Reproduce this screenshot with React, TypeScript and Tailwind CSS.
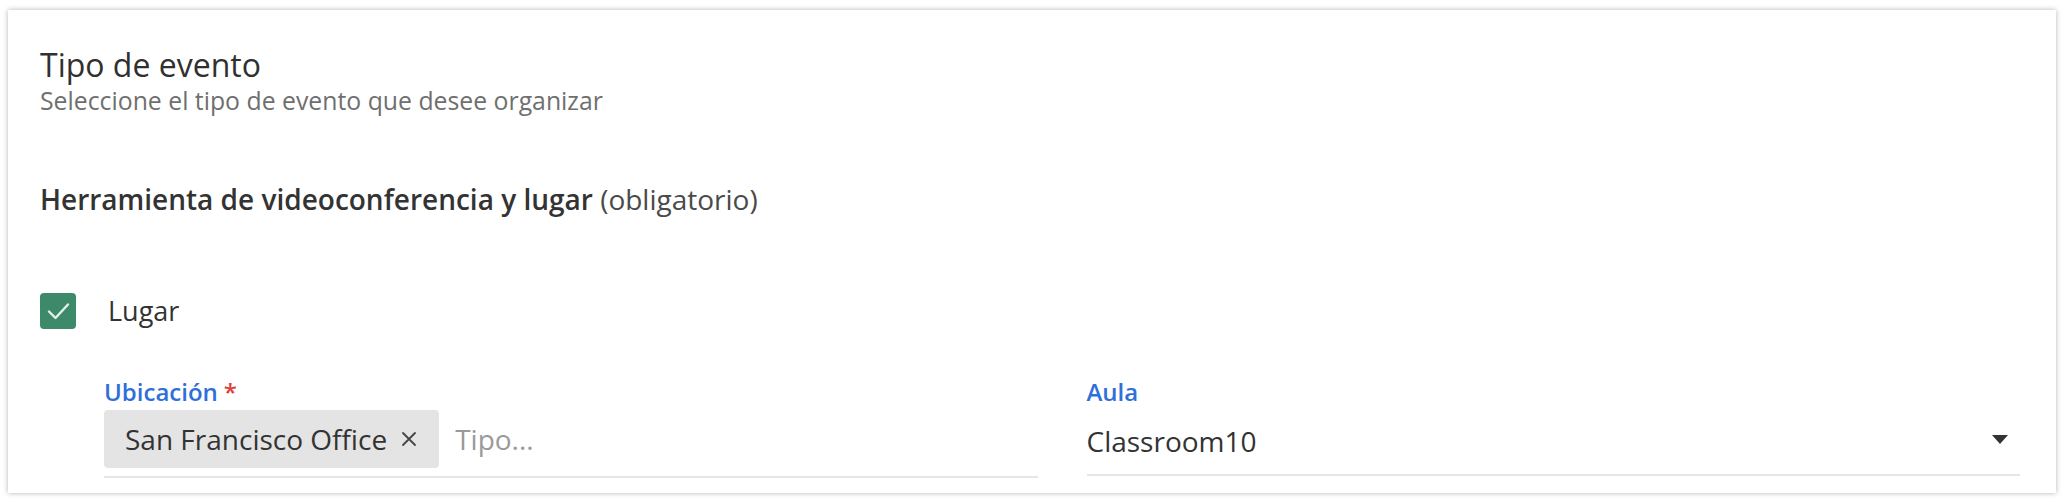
import { useState } from 'react';

const font = "font-['Open_Sans','Noto_Sans',sans-serif]";

function CheckBox({ checked, onToggle }: { checked: boolean; onToggle: () => void }) {
  return (
    <button
      type="button"
      onClick={onToggle}
      className={`flex h-[36px] w-[36px] items-center justify-center rounded-[4px] ${
        checked ? 'bg-[#3d8a6b]' : 'border-2 border-[#9e9e9e] bg-white'
      }`}
    >
      {checked && (
        <svg width="36" height="36" viewBox="0 0 36 36" fill="none">
          <path d="M9 18.5l6.5 6.5L28 11.5" stroke="#e3f1ea" strokeWidth="2.4" strokeLinecap="round" strokeLinejoin="round" />
        </svg>
      )}
    </button>
  );
}

function FieldLabel({ text, required }: { text: string; required?: boolean }) {
  return (
    <div className="h-[32px] text-[24px] leading-[32px] font-semibold text-[#2f6fd9]">
      {text}
      {required && <span className="ml-[6px] text-[#e0403a]">*</span>}
    </div>
  );
}

export default function App() {
  const [useVenue, setUseVenue] = useState(true);
  const [places, setPlaces] = useState(['San Francisco Office']);

  return (
    <div className={`min-h-screen bg-white px-[8px] pt-[10px] ${font}`}>
      <div className="w-[2048px] bg-white pl-[32px] pr-[36px] pt-[35px] pb-[15px] shadow-[0_0_5px_rgba(0,0,0,0.3)]">
        <h2 className="text-[32px] leading-[40px] font-medium text-[#303030]">Tipo de evento</h2>
        <p className="text-[24.8px] leading-[30px] text-[#6f6f6f]">
          Seleccione el tipo de evento que desee organizar
        </p>

        <div className="mt-[66px] text-[28px] leading-[36px] text-[#333333]">
          <span className="font-semibold">Herramienta de videoconferencia y lugar</span>{' '}
          <span className="text-[#4a4a4a]">(obligatorio)</span>
        </div>

        <label className="mt-[76px] flex h-[36px] items-center gap-[32px]">
          <CheckBox checked={useVenue} onToggle={() => setUseVenue(!useVenue)} />
          <span className="text-[27px] text-[#333333]">Lugar</span>
        </label>

        <div className="mt-[47px] ml-[64px] grid grid-cols-2 gap-[49px]">
          {/* location tags */}
          <div>
            <FieldLabel text="Ubicación" required />
            <div className="mt-[2px] flex items-center gap-[16px] border-b-2 border-[#e6e6e6] pb-[8px]">
              {places.map((p) => (
                <span
                  key={p}
                  className="flex h-[58px] items-center gap-[14px] rounded-[4px] bg-[#e4e4e4] pl-[21px] pr-[22px] text-[28px] text-[#333333]"
                >
                  {p}
                  <button type="button" onClick={() => setPlaces(places.filter((x) => x !== p))}>
                    <svg width="16" height="16" viewBox="0 0 16 16" fill="none">
                      <path d="M2 2l12 12M14 2L2 14" stroke="#444" strokeWidth="1.8" strokeLinecap="round" />
                    </svg>
                  </button>
                </span>
              ))}
              <input
                className="min-w-0 flex-1 bg-transparent text-[28px] text-[#333333] outline-none placeholder:text-[#9a9a9a]"
                placeholder="Tipo..."
              />
            </div>
          </div>

          {/* classroom select */}
          <div>
            <FieldLabel text="Aula" />
            <div className="mt-[2px] flex h-[66px] items-center justify-between border-b-2 border-[#e6e6e6] pb-[3px]">
              <span className="text-[28px] text-[#333333]">Classroom10</span>
              <svg width="16" height="9" viewBox="0 0 16 9" className="mr-[12px] mb-[2px]">
                <path d="M0 0h16L8 9z" fill="#333" />
              </svg>
            </div>
          </div>
        </div>
      </div>
    </div>
  );
}
